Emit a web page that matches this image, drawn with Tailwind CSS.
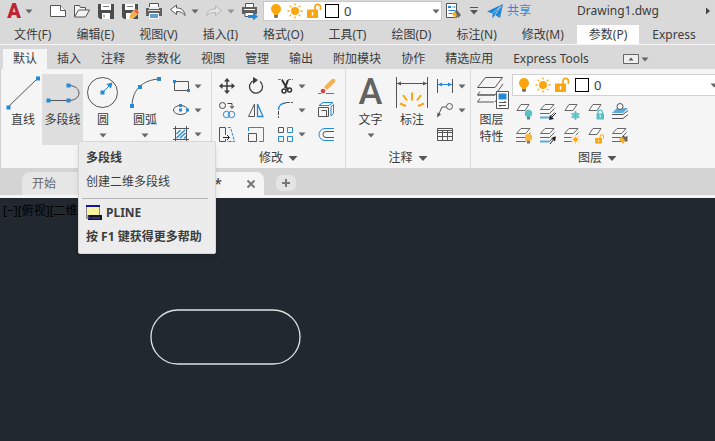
<!DOCTYPE html>
<html lang="zh-CN">
<head>
  <meta charset="UTF-8">
  <meta name="viewport" content="width=device-width, initial-scale=1.0">
  <title>Drawing1.dwg</title>
  <script src="https://cdn.jsdelivr.net/npm/@tailwindcss/browser@4"></script>
</head>
<body class="flex flex-col min-h-screen overflow-hidden bg-[#d9d9d9] text-[#3c3c3c] text-xs whitespace-nowrap font-['Noto_Sans','Noto_Sans_CJK_SC',sans-serif]">

  <!-- shared icons -->
  <svg class="hidden">
    <symbol id="chev" viewBox="0 0 10 10"><path d="M1.500 3.500h7L5 7.500z" fill="#666"/></symbol>
    <symbol id="bulb" viewBox="0 0 16 16"><circle cx="8" cy="6" r="5" fill="#fba60f"/><path d="M5 8h6l-1 4H6z" fill="#fba60f"/><path d="M6 12h4v2l-1 1H7l-1-1z" fill="#777"/></symbol>
    <symbol id="sun" viewBox="0 0 16 16"><circle cx="8" cy="8" r="4" fill="#fba60f"/><path d="M8 .5v2M8 13.500v2M.5 8h2M13.500 8h2M2.700 2.700l1.400 1.400M11.900 11.900l1.400 1.400M2.700 13.300l1.400-1.400M11.900 4.100l1.400-1.400" stroke="#fba60f" stroke-width="1.300"/></symbol>
    <symbol id="lock" viewBox="0 0 16 16"><path d="M9 7V4a2.700 2.700 0 0 1 5.400 0v3" fill="none" stroke="#fba60f" stroke-width="1.700"/><path d="M1 6.500h11v8.500H1z" fill="#fba60f"/><path d="M6.500 9v3.500" stroke="#fff" stroke-width="1.500"/></symbol>
    <symbol id="sheet" viewBox="0 0 24 24"><path d="M9 4.500h8l-4 6H5z" fill="#fafafa" stroke="#666"/></symbol>
    <symbol id="stack" viewBox="0 0 24 24" fill="none" stroke="#666"><path d="M9 4.500h9l-4.500 5H4.500z" fill="#fafafa"/><path d="M4 13.500h9.500l5-5M4 17.500h9.500l5-5"/></symbol>
  </svg>

  <!-- quick access bar -->
  <header class="flex items-center h-[22px] shrink-0">
    <button class="flex items-center w-[34px] pl-1 mr-[11px]" aria-label="AutoCAD">
      <span class="text-xl leading-[22px] font-black text-[#bd2333] font-['Roboto',sans-serif] w-5">A</span>
      <svg class="size-[10px] shrink-0"><use href="#chev"/></svg>
    </button>
    <button aria-label="新建"><svg class="size-6" fill="#fff" stroke="#555"><path d="M5.500 6.500h10l5 5v6h-15z"/><path d="M15.500 6.500v5h5"/></svg></button>
    <button aria-label="打开"><svg class="size-6" fill="#f4f4f4" stroke="#555"><path d="M5.500 18V6.500h5l1 2h5V11"/><path d="M5.500 18l4-7h11l-4 7z"/></svg></button>
    <button aria-label="保存"><svg class="size-6"><path d="M5 5h16v15H7l-2-2z" fill="#4d4d4d"/><path d="M8 5h10v6H8zM9 14h8v6H9z" fill="#fff"/><path d="M11 15.500v3M10 7.500h6" stroke="#777"/></svg></button>
    <button aria-label="另存为"><svg class="size-6"><path d="M5 5h16v15H7l-2-2z" fill="#4d4d4d"/><path d="M8 5h10v6H8zM9 14h5v6H9z" fill="#fff"/><path d="M10 7.500h6" stroke="#777"/><path d="M18.500 10l3.500 3.500-6 6-4 .8.600-4.300z" fill="#f6ae3c" stroke="#fff" stroke-width=".7"/><path d="M18.500 10l3.500 3.500-1.500 1.500L17 11.500z" fill="#e25a41"/></svg></button>
    <button aria-label="打印"><svg class="size-6"><path d="M8.500 4.500h9v6h-9z" fill="#fff" stroke="#555"/><path d="M5 9h16v8H5z" fill="#606060"/><path d="M8 8h10v2H8z" fill="#ececec"/><path d="M7 11.500h12" stroke="#ddd"/><path d="M8.500 14.500h9v5h-9z" fill="#5f9fd0" stroke="#fff"/></svg></button>
    <button aria-label="放弃"><svg class="size-6"><path d="M5.500 10.500L11.500 6v3c5 0 8 2.500 8.500 7.500-2-3-4.500-4-8.500-4v3z" fill="#fff" stroke="#555"/></svg></button>
    <button class="w-3" aria-label="放弃列表"><svg class="size-[10px] mx-auto"><use href="#chev"/></svg></button>
    <button aria-label="重做"><svg class="size-6"><path d="M20.500 11.500l-6-4.500v3c-5 0-8 1.500-9 6.500 2.500-2.500 5-3 9-3v3z" fill="#e4e4e4" stroke="#b5b5b5"/></svg></button>
    <button class="w-3 opacity-60" aria-label="重做列表"><svg class="size-[10px] mx-auto"><use href="#chev"/></svg></button>
    <button aria-label="批处理打印"><svg class="size-6"><path d="M8.500 4.500h8v4h-8z" fill="#fff" stroke="#555"/><path d="M5 8h15v7H5z" fill="#606060"/><path d="M7 10.500h11" stroke="#fff"/><path d="M8 13.500h9v4H8z" fill="#fff" stroke="#555"/><path d="M11 16h5v-2.500l5 4-5 4V19h-5z" fill="#2489d6"/></svg></button>
    <div class="flex items-center h-5 w-[179px] ml-[2px] pl-1 gap-[3px] bg-white border border-[#c9c9c9]">
      <svg class="size-4"><use href="#bulb"/></svg>
      <svg class="size-4"><use href="#sun"/></svg>
      <svg class="size-4"><use href="#lock"/></svg>
      <span class="size-[14px] border border-black"></span>
      <div class="relative flex grow items-center">
        <select aria-label="当前图层" class="w-full appearance-none bg-transparent pl-[2px] text-[13px] leading-4"><option>0</option></select>
        <svg class="absolute right-0 size-[10px] pointer-events-none"><use href="#chev"/></svg>
      </div>
    </div>
    <button aria-label="特性匹配"><svg class="size-6"><path d="M4.500 4.500h10v14h-10z" fill="#fff" stroke="#555"/><path d="M6 7h3v2H6z" fill="#2489d6"/><path d="M10.500 8h3M6.500 11.500h7M6.500 14.500h4" stroke="#2489d6"/><path d="M10 15l3-3 3 3-3 4z" fill="#f2b134"/><path d="M13 12l2-1 4 5-3 3z" fill="#666"/></svg></button>
    <button class="w-4" aria-label="自定义"><svg class="w-[10px] h-3 mx-auto"><path d="M1 2.500h8" stroke="#555"/><path d="M1 5h8L5 9.500z" fill="#555"/></svg></button>
    <button class="flex items-center gap-[2px] ml-[3px] text-[#1c8fe8]"><svg class="size-5"><path d="M2 10.500L18 3l-3 14-5-3-2.500 3.500V12.500z" fill="#1c86d8"/><path d="M7.500 12.500L16 5l-6 9" fill="none" stroke="#d9d9d9" stroke-width=".8"/></svg>共享</button>
    <h1 class="ml-[46px] text-xs">Drawing1.dwg</h1>
    <svg class="size-[10px] ml-auto mr-[2px]"><path d="M3 1.500v7L7 5z" fill="#444"/></svg>
  </header>

  <!-- menu bar -->
  <nav class="flex items-end h-[23px] shrink-0 border-b border-[#f5f5f5] pl-[2px] gap-px">
    <button class="px-3 h-[19px] leading-[19px]">文件(F)</button>
    <button class="px-3 h-[19px] leading-[19px]">编辑(E)</button>
    <button class="px-3 h-[19px] leading-[19px]">视图(V)</button>
    <button class="px-3 h-[19px] leading-[19px]">插入(I)</button>
    <button class="px-3 h-[19px] leading-[19px]">格式(O)</button>
    <button class="px-3 h-[19px] leading-[19px]">工具(T)</button>
    <button class="px-3 h-[19px] leading-[19px]">绘图(D)</button>
    <button class="px-3 h-[19px] leading-[19px]">标注(N)</button>
    <button class="px-3 h-[19px] leading-[19px]">修改(M)</button>
    <button class="px-3 h-[19px] leading-[19px] bg-white">参数(P)</button>
    <button class="px-3 h-[19px] leading-[19px]">Express</button>
  </nav>

  <!-- ribbon tabs -->
  <nav class="flex items-end h-6 shrink-0 pl-[3px]">
    <button class="px-[10px] h-5 leading-5 bg-[#f5f5f5]">默认</button>
    <button class="px-[10px] h-5 leading-5">插入</button>
    <button class="px-[10px] h-5 leading-5">注释</button>
    <button class="px-[10px] h-5 leading-5">参数化</button>
    <button class="px-[10px] h-5 leading-5">视图</button>
    <button class="px-[10px] h-5 leading-5">管理</button>
    <button class="px-[10px] h-5 leading-5">输出</button>
    <button class="px-[10px] h-5 leading-5">附加模块</button>
    <button class="px-[10px] h-5 leading-5">协作</button>
    <button class="px-[10px] h-5 leading-5">精选应用</button>
    <button class="px-[10px] h-5 leading-5">Express Tools</button>
    <button class="flex items-center h-5 ml-6 gap-px" aria-label="最小化功能区"><svg class="w-4 h-[10px]"><path d="M.5.5h15v9H.5z" fill="#eee" stroke="#666"/><path d="M5.500 6.500h5L8 3.500z" fill="#555"/></svg><svg class="size-[10px]"><use href="#chev"/></svg></button>
  </nav>

  <!-- ribbon -->
  <main class="flex h-[99px] shrink-0 bg-[#f5f5f5] border-l border-[#cfcfcf]">
    <section class="relative flex pt-[5px] pl-[3px] w-[211px] shrink-0 border-r border-[#dcdcdc]">
      <button class="flex flex-col items-center w-[38px] h-[71px]">
        <svg class="size-9"><path d="M3 33L33 4" stroke="#555"/><path d="M1.500 31.500h4v4h-4zM31 2.500h4v4h-4z" fill="#2489d6"/></svg>
        <span class="leading-5">直线</span>
      </button>
      <button class="flex flex-col items-center w-[41px] h-[71px] bg-[#dedede]">
        <svg class="size-9"><path d="M3 26.500h20.500c14 0 14-15 0-15" fill="none" stroke="#555"/><path d="M1.500 24.500h4v4h-4zM21.500 24.500h4v4h-4zM21.500 9.500h4v4h-4z" fill="#2489d6"/></svg>
        <span class="leading-5">多段线</span>
      </button>
      <button class="flex flex-col items-center w-[40px] h-[71px]">
        <svg class="size-9"><circle cx="17.500" cy="18.500" r="15" fill="none" stroke="#555"/><path d="M17.500 18.500l7-7" stroke="#2489d6"/><path d="M15.500 16.500h4v4h-4zM27.500 8.500l-1.500 6-4.500-4.500z" fill="#2489d6"/></svg>
        <span class="leading-5">圆</span>
        <svg class="size-[10px]"><use href="#chev"/></svg>
      </button>
      <button class="flex flex-col items-center w-[44px] h-[71px]">
        <svg class="size-9"><path d="M5 32C5.500 15 16 6 32 5" fill="none" stroke="#555"/><path d="M3 30h4v4H3zM11 11h4v4h-4zM30 3h4v4h-4z" fill="#2489d6"/></svg>
        <span class="leading-5">圆弧</span>
        <svg class="size-[10px]"><use href="#chev"/></svg>
      </button>
      <div class="flex flex-col ml-[2px]">
        <button class="flex items-center" aria-label="矩形"><svg class="size-6"><path d="M5.500 7.500h14v9h-14z" fill="none" stroke="#555"/><path d="M4 6h3v3H4zM18 15h3v3h-3z" fill="#2489d6"/></svg><svg class="size-[10px]"><use href="#chev"/></svg></button>
        <button class="flex items-center" aria-label="椭圆"><svg class="size-6"><ellipse cx="11.500" cy="12" rx="7" ry="4.500" fill="none" stroke="#555"/><path d="M10 6h3v3h-3zM10 10.500h3v3h-3zM17 10.500h3v3h-3z" fill="#2489d6"/></svg><svg class="size-[10px]"><use href="#chev"/></svg></button>
        <button class="flex items-center" aria-label="图案填充"><svg class="size-6" fill="none"><path d="M4 6.500h16M4 17.500h16M6.500 4v16M17.500 4v16" stroke="#555"/><path d="M7.500 12l4-4M7.500 16l8.500-8M11 16l5.500-5M15 16.500l2-2" stroke="#2489d6" stroke-width="1.300"/></svg><svg class="size-[10px]"><use href="#chev"/></svg></button>
      </div>
      <!-- tooltip of the polyline tool -->
      <div role="tooltip" class="absolute left-[77px] top-[72px] z-10 w-[138px] h-[113px] px-[7px] pt-[6px] rounded-xs bg-[#ececec] border border-[#d6d6d6] shadow-md">
        <p class="font-bold leading-5">多段线</p>
        <p class="leading-5 pt-1">创建二维多段线</p>
        <hr class="border-[#b5b5b5] mt-[6px] mb-1 -ml-1">
        <p class="flex items-center gap-1 font-bold leading-5"><svg class="size-4"><path d="M.5 1.500h13v12H.5z" fill="#f7f3a0" stroke="#888"/><path d="M0 0h14v2H0z" fill="#1414a0"/><path d="M2 10h14v5H2z" fill="#14141e"/><path d="M2 10v3h3M6 13h8" fill="none" stroke="#55c"/></svg>PLINE</p>
        <p class="font-bold leading-5 pt-1">按 F1 键获得更多帮助</p>
      </div>
    </section>

    <section class="flex flex-col w-[134px] pt-[5px] shrink-0 border-r border-[#dcdcdc]">
      <div class="grid grid-cols-[29px_29px_24px_17px_24px] items-center pl-[3px]">
        <button aria-label="移动"><svg class="size-6"><path d="M6 12h12M12 6v12" stroke="#3c3c3c" stroke-width="1.500"/><path d="M4 12l3.500-3v6zM20 12l-3.500-3v6zM12 4L9 7.500h6zM12 20l-3-3.500h6z" fill="#3c3c3c"/></svg></button>
        <button aria-label="旋转"><svg class="size-6"><path d="M10 6.500A6.500 6.500 0 1 0 16 7.500" fill="none" stroke="#3c3c3c" stroke-width="1.300"/><path d="M9 3l5 3-5 4z" fill="#3c3c3c"/></svg></button>
        <button aria-label="修剪"><svg class="size-6" fill="none" stroke="#333"><path d="M5 5.500h5M15 5.500h5" stroke="#2489d6" stroke-dasharray="3 1"/><path d="M9 6l6 10M15 6l-3 8" stroke-width="2"/><circle cx="11" cy="17" r="2" stroke-width="1.500"/><circle cx="16.500" cy="16" r="2" stroke-width="1.500"/></svg></button>
        <button aria-label="修剪列表"><svg class="size-[10px]"><use href="#chev"/></svg></button>
        <button aria-label="删除"><svg class="size-6"><path d="M18 5h3v3l-8 8-3-3z" fill="#f4b04a"/><circle cx="9" cy="17" r="2.300" fill="#e03c40"/><path d="M4 19.500h3M12 19.500h8" stroke="#2489d6"/></svg></button>

        <button aria-label="复制"><svg class="size-6" fill="none" stroke="#444"><circle cx="7.500" cy="7.500" r="3"/><path d="M12.500 5.500H17V10M15 8l2 2.500L19 8"/><g stroke="#2489d6"><circle cx="11.500" cy="16.500" r="3.200"/><circle cx="16.500" cy="16.500" r="3.200"/></g></svg></button>
        <button aria-label="镜像"><svg class="size-6" fill="none"><path d="M10.500 6v12.500h-6z" stroke="#555"/><path d="M13.500 6v12.500h5.500z" stroke="#2489d6" stroke-width="1.300"/></svg></button>
        <button aria-label="圆角"><svg class="size-6" fill="none"><path d="M5.500 12c0-5 3-7 7.500-7" stroke="#2489d6" stroke-width="1.300"/><path d="M5.500 13v7M13 4.500h7" stroke="#555" stroke-dasharray="4 1"/></svg></button>
        <button aria-label="圆角列表"><svg class="size-[10px]"><use href="#chev"/></svg></button>
        <button aria-label="分解"><svg class="size-6" fill="none"><path d="M4.500 9.500h10v9h-10z M7.500 12.500h5v6" stroke="#555"/><path d="M5 7.500l4-3h10l-4 3zM17 9l2.500-2.500v9L17 18z" stroke="#2489d6"/></svg></button>

        <button aria-label="拉伸"><svg class="size-6" fill="none"><path d="M10.500 13V5.500h-6v14h6V17" stroke="#555"/><path d="M13 5.500h2.500l4 14H12" stroke="#2489d6" stroke-dasharray="3 1"/><path d="M8 15.500h6M12 13l2.500 2.500L12 18" stroke="#222"/></svg></button>
        <button aria-label="缩放"><svg class="size-6" fill="none"><path d="M4.500 9V5.500h15v14H15" stroke="#2489d6"/><path d="M4.500 11.500h8v8h-8z" stroke="#555"/></svg></button>
        <button aria-label="阵列"><svg class="size-6" fill="none" stroke="#2489d6"><path d="M5.500 14.500h5v5h-5zM14.500 5.500h5v5h-5zM14.500 14.500h5v5h-5z"/><path d="M5.500 5.500h5v5h-5z" stroke="#555"/></svg></button>
        <button aria-label="阵列列表"><svg class="size-[10px]"><use href="#chev"/></svg></button>
        <button aria-label="偏移"><svg class="size-6" fill="none"><path d="M20 6.500h-9a6 6 0 0 0 0 12h9" stroke="#2489d6"/><path d="M20 9.500h-8a3 3 0 0 0 0 6h8" stroke="#555"/></svg></button>
      </div>
      <button class="flex items-center justify-center gap-[5px] grow pt-[2px]">修改<svg class="size-[10px]"><path d="M.5 3h9L5 8z" fill="#555"/></svg></button>
    </section>

    <section class="flex flex-col w-[125px] pt-[5px] shrink-0 border-r border-[#dcdcdc]">
      <div class="flex h-[72px] pl-1">
        <button class="flex flex-col items-center w-[41px] h-[71px]">
          <span class="h-9 leading-9 text-4xl font-medium text-[#636363] font-['Roboto',sans-serif]">A</span>
          <span class="leading-5">文字</span>
          <svg class="size-[10px]"><use href="#chev"/></svg>
        </button>
        <button class="flex flex-col items-center w-[42px] h-[71px]">
          <svg class="size-9"><path d="M2.500 3v31M33.500 3v31M3 9.500h30" stroke="#555"/><path d="M3 9.500L7 7.500v4zM33 9.500l-4-2v4z" fill="#555"/><path d="M18 18.500v8M9 21l4 5.500M27 21l-4 5.500M6 29.500l6 2.500M30 29.500L24 32" stroke="#fba60f" stroke-width="2"/></svg>
          <span class="leading-5">标注</span>
        </button>
        <div class="flex flex-col">
          <button class="flex items-center" aria-label="线性"><svg class="size-6"><path d="M4.500 5v14M19.500 5v14" stroke="#555"/><path d="M5 10.500h14" stroke="#2489d6"/><path d="M5 10.500l4-2v4zM19 10.500l-4-2v4z" fill="#2489d6"/></svg><svg class="size-[10px]"><use href="#chev"/></svg></button>
          <button class="flex items-center" aria-label="引线"><svg class="size-6"><path d="M5 18l4-9h4" fill="none" stroke="#555"/><circle cx="16.500" cy="8.500" r="3" fill="none" stroke="#555"/><path d="M4 19.500l.500-5 3.500 2z" fill="#555"/></svg><svg class="size-[10px]"><use href="#chev"/></svg></button>
          <button aria-label="表格"><svg class="size-6"><path d="M4.500 6.500h15v12h-15zM4.500 10.500h15M4.500 14.500h15M9.500 9v9.500M14.500 9v9.500M4.500 8.500h15" fill="none" stroke="#555"/></svg></button>
        </div>
      </div>
      <button class="flex items-center justify-center gap-[5px] grow pt-[2px]">注释<svg class="size-[10px]"><path d="M.5 3h9L5 8z" fill="#555"/></svg></button>
    </section>

    <section class="flex grow pt-[5px]">
      <button class="flex flex-col items-center w-[41px] shrink-0 h-[71px]">
        <svg class="size-9" fill="none" stroke="#555"><path d="M11.500 3.500h17l-7.500 10H3.500z"/><path d="M6 17.500l-2.500 3.500H21l8-11M6 24.500L3.500 28H20M21 28l3-4M3.500 21H21"/><path d="M22.500 17.500h12v17h-12z" fill="#fff"/><path d="M24.500 19.500h8v6h-8z" fill="#2489d6" stroke="none"/><path d="M25 28.500h7M25 31.500h7M30.500 27l1.500 1.500M26.500 33L25 31.500"/></svg>
        <span class="leading-[17px] pt-0.5">图层<br>特性</span>
      </button>
      <div class="flex flex-col grow">
        <div class="flex items-center h-[22px] pl-[3px] gap-[3px] bg-white border border-r-0 border-[#d0d0d0]">
          <svg class="size-4"><use href="#bulb"/></svg>
          <svg class="size-4"><use href="#sun"/></svg>
          <svg class="size-4"><use href="#lock"/></svg>
          <span class="size-[14px] border border-black ml-[2px]"></span>
          <div class="relative flex grow items-center">
            <select aria-label="图层" class="w-full appearance-none bg-transparent pl-[2px] text-[13px] leading-4"><option>0</option></select>
            <svg class="absolute -right-1 size-[10px] pointer-events-none"><use href="#chev"/></svg>
          </div>
        </div>
        <div class="grid grid-cols-[repeat(5,24px)] pt-1">
          <button aria-label="关闭图层"><svg class="size-6"><use href="#sheet"/><circle cx="16.500" cy="13.500" r="3.700" fill="#5bbfc4"/><path d="M15 17h3v2.500h-3z" fill="#777"/></svg></button>
          <button aria-label="隔离"><svg class="size-6"><use href="#stack"/><path d="M4 17.500h10" stroke="#5da9e0" stroke-width="2"/><path d="M20 13l-5 5" stroke="#222"/><path d="M13 20l1-5 4 4z" fill="#222"/></svg></button>
          <button aria-label="冻结"><svg class="size-6"><use href="#sheet"/><path d="M15.500 11v9M11.500 13.300l8 4.400M19.500 13.300l-8 4.400" stroke="#5bbfc4" stroke-width="1.500"/><circle cx="15.500" cy="15.500" r="2.800" fill="none" stroke="#5bbfc4"/></svg></button>
          <button aria-label="锁定"><svg class="size-6"><use href="#sheet"/><path d="M14 14v-2a2.300 2.300 0 0 1 4.500 0v2" fill="none" stroke="#5bbfc4" stroke-width="1.300"/><path d="M12.500 13.500h7.500v6h-7.500z" fill="#5bbfc4"/><path d="M16.200 15v2.500" stroke="#fff"/></svg></button>
          <button aria-label="置为当前"><svg class="size-6"><path d="M4 14.500h11l5-4M4 18.500h11l5-4" fill="none" stroke="#555"/><path d="M4 13l5-5h11l-5 5z" fill="#5da9e0"/><circle cx="12" cy="6.500" r="3" fill="#f5f5f5" stroke="#555"/></svg></button>
          <button aria-label="打开所有图层"><svg class="size-6"><use href="#stack"/><circle cx="16.500" cy="13.500" r="3.700" fill="#f9b548"/><path d="M15 17h3v2.500h-3z" fill="#777"/></svg></button>
          <button aria-label="取消隔离"><svg class="size-6"><use href="#stack"/><path d="M4 17.500h9" stroke="#5da9e0" stroke-width="2"/><path d="M14 20l4-5" stroke="#222"/><path d="M20 12.500l-1 5-4-3.500z" fill="#222"/></svg></button>
          <button aria-label="解冻所有图层"><svg class="size-6"><use href="#stack"/><circle cx="15.500" cy="15.500" r="4.500" fill="#f5f5f5"/><use href="#sun" x="11" y="11" width="9" height="9"/></svg></button>
          <button aria-label="解锁"><svg class="size-6"><use href="#sheet"/><use href="#lock" x="10.500" y="10" width="10" height="10"/></svg></button>
          <button aria-label="匹配图层"><svg class="size-6"><use href="#stack"/><path d="M11 15l3-2.500 4 4-3 3.500z" fill="#f2b134"/><path d="M14 12.500l2-1 1 1.500 2-1 1 2-1 1 1 1.500-2 1.500z" fill="#666"/></svg></button>
        </div>
        <button class="flex items-center gap-[5px] grow pl-[66px]">图层<svg class="size-[10px]"><path d="M.5 3h9L5 8z" fill="#555"/></svg></button>
      </div>
    </section>
  </main>

  <!-- drawing tabs -->
  <nav class="flex items-end h-[30px] shrink-0 bg-[#d4d4d4] border-b-3 border-[#f5f5f5]">
    <button class="h-[23px] w-[120px] ml-[22px] pl-[10px] text-left leading-[22px] text-[#666] bg-[#e6e6e6] rounded-t-lg">开始</button>
    <div class="flex items-center justify-end h-[23px] w-[122px] pr-2 bg-[#f5f5f5] rounded-t-lg">
      <span class="pr-6 text-sm">*</span>
      <button aria-label="关闭"><svg class="size-[10px]"><path d="M1.500 1.500l7 7M8.500 1.500l-7 7" stroke="#777" stroke-width="2"/></svg></button>
    </div>
    <button class="flex items-center justify-center w-5 h-4 ml-3 mb-1 bg-[#e4e4e4] rounded-md" aria-label="新图形"><svg class="size-[10px]"><path d="M5 1v8M1 5h8" stroke="#777" stroke-width="2"/></svg></button>
  </nav>

  <!-- model space -->
  <div class="relative grow min-h-[243px] bg-[#212830]">
    <p class="pl-[3px] pt-1 leading-[18px] text-black">[−][俯视][二维线框]</p>
    <svg class="absolute left-[150px] top-[111px] w-[151px] h-14"><rect x="1" y="1" width="149" height="54" rx="27" fill="none" stroke="#dfe1e3" stroke-width="1.300"/></svg>
  </div>

</body>
</html>
